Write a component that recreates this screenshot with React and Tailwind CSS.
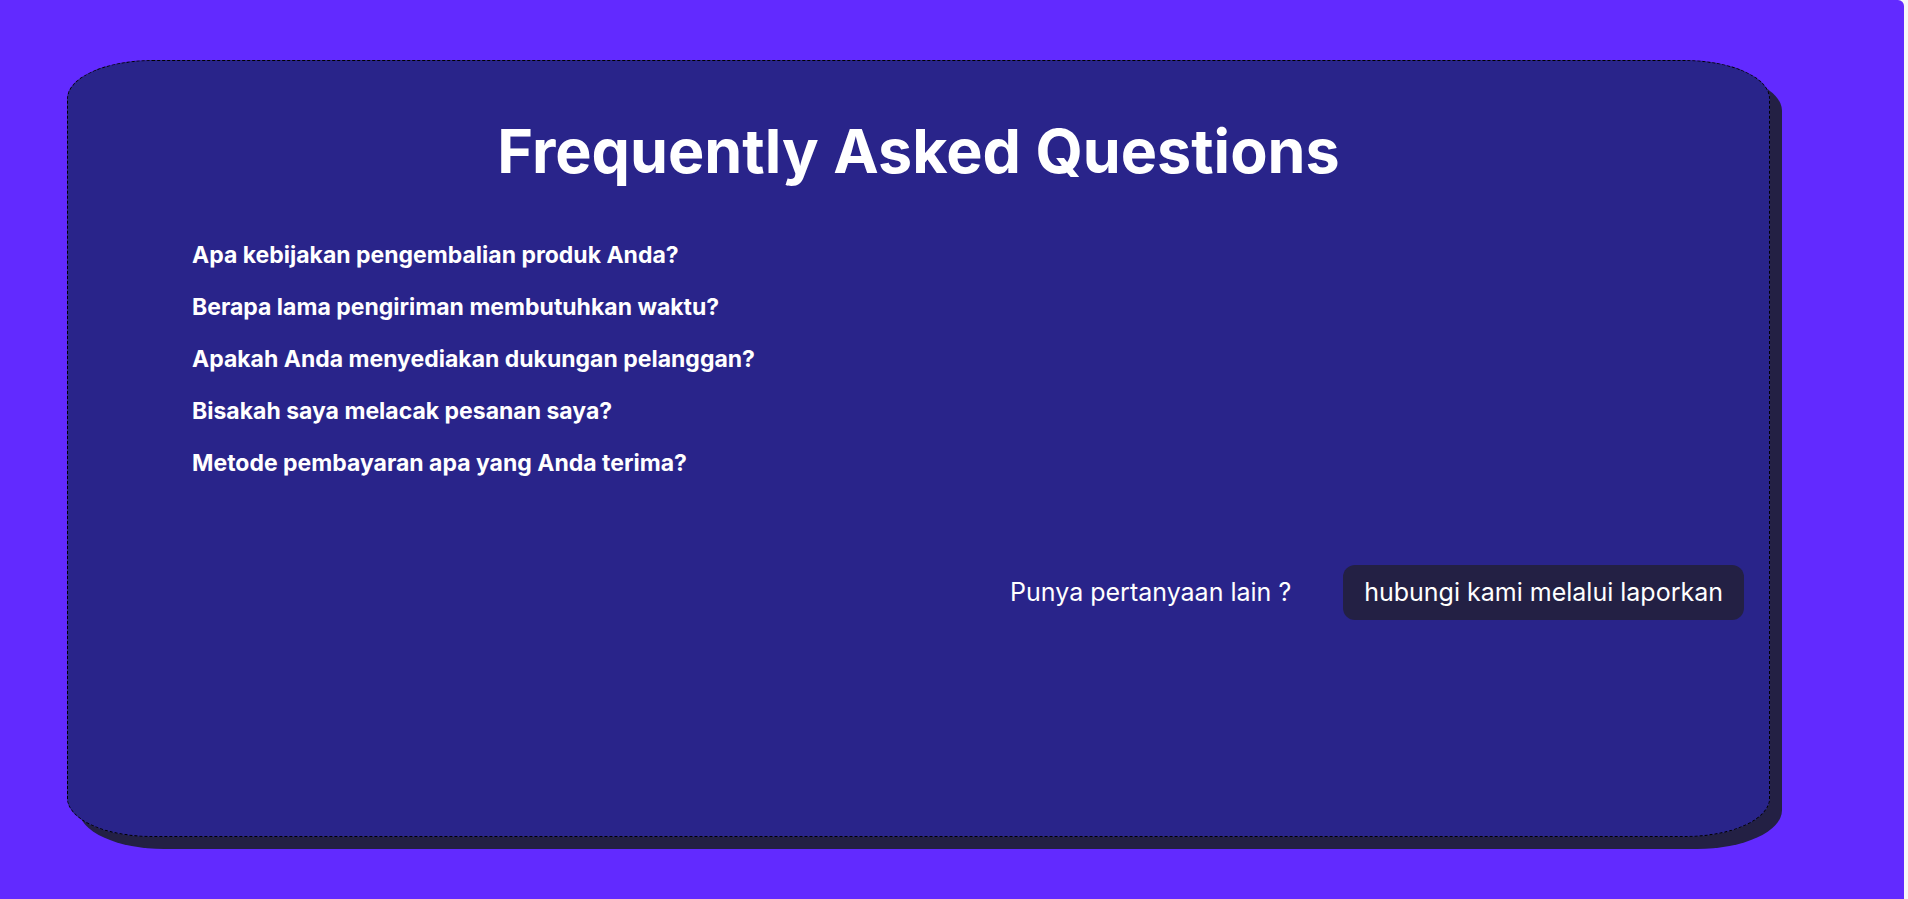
const questions = [
  'Apa kebijakan pengembalian produk Anda?',
  'Berapa lama pengiriman membutuhkan waktu?',
  'Apakah Anda menyediakan dukungan pelanggan?',
  'Bisakah saya melacak pesanan saya?',
  'Metode pembayaran apa yang Anda terima?',
];

export default function App() {
  return (
    <div className="min-h-screen bg-[#f7f7f7] pr-1">
      <main className="flex min-h-screen flex-col rounded-tr-md bg-[#622aff] pt-[60px] pr-[134px] pb-[62px] pl-[67px] font-['Inter',sans-serif] text-white">
        <section className="flex flex-1 flex-col rounded-[5%] border border-dashed border-black bg-[#29248a] px-[25px] pt-[58px] shadow-[12px_12px_0_#232044]">
          <h1 className="text-center text-[61px] leading-[64px] font-bold">
            Frequently Asked Questions
          </h1>
          <ul className="mt-14 flex flex-col items-start gap-5 pl-[99px]">
            {questions.map((question) => (
              <li key={question}>
                <button type="button" className="block text-left text-[23px] leading-8 font-bold">
                  {question}
                </button>
              </li>
            ))}
          </ul>
          <div className="mt-[86px] flex items-center justify-end gap-[52px] text-[25px] leading-[31px]">
            <p>Punya pertanyaan lain ?</p>
            <a href="#laporkan" className="rounded-xl bg-[#232044] px-[21px] py-3">
              hubungi kami melalui laporkan
            </a>
          </div>
        </section>
      </main>
    </div>
  );
}
